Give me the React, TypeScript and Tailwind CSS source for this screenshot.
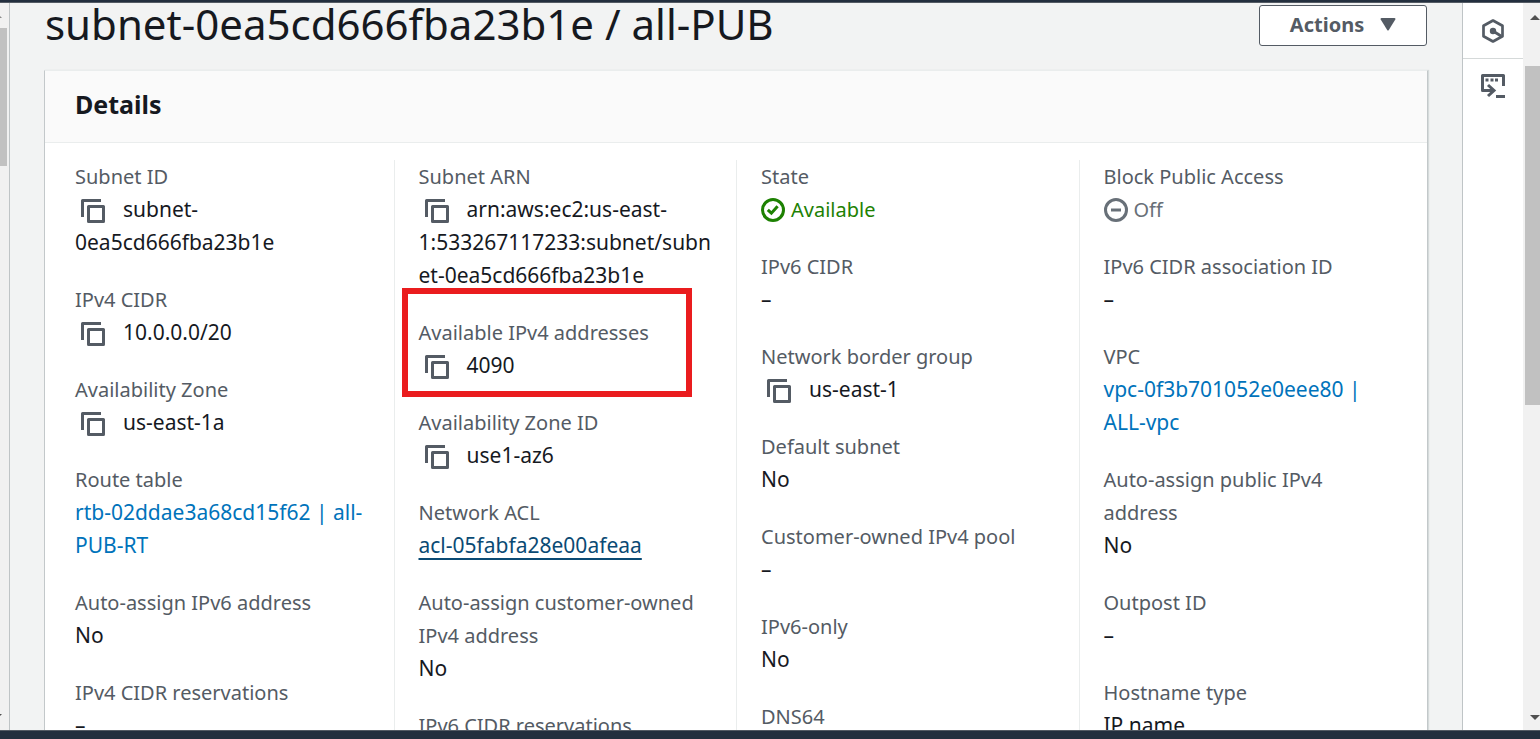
import type { ReactNode } from 'react';

function CopyButton({ label }: { label: string }) {
  return (
    <button
      type="button"
      aria-label={`Copy ${label}`}
      className="ml-1.5 mr-[18px] inline-flex h-[33px] items-center pt-0.5 align-top text-[#545b64]"
    >
      <svg width="24" height="24" viewBox="0 0 24 24" fill="none" stroke="currentColor" strokeWidth="3" strokeLinejoin="round">
        <path d="M1.5 18V1.5H20" />
        <path d="M7.5 7.5h15v15h-15z" />
      </svg>
    </button>
  );
}

function CheckIcon() {
  return (
    <svg className="mt-px" width="24" height="24" viewBox="0 0 24 24" fill="none" stroke="currentColor" strokeWidth="3">
      <circle cx="12" cy="12" r="10.5" />
      <path d="M6.8 11.8l3.6 3.4 6.2-7" />
    </svg>
  );
}

function MinusIcon() {
  return (
    <svg className="mt-px" width="24" height="24" viewBox="0 0 24 24" fill="none" stroke="currentColor" strokeWidth="3">
      <circle cx="12" cy="12" r="10.5" />
      <path d="M7 12h10" />
    </svg>
  );
}

function Item({ label, copy, marked, children }: { label: string; copy?: boolean; marked?: boolean; children: ReactNode }) {
  return (
    <div className="relative">
      <dt className="text-[20px] text-[#545b64]">{label}</dt>
      <dd className="break-words text-[#16191f]">
        {copy && <CopyButton label={label} />}
        {children}
      </dd>
      {marked && (
        <div className="pointer-events-none absolute -bottom-[15px] -left-[17px] -top-[28px] right-6 border-6 border-[#ea1c1e]" />
      )}
    </div>
  );
}

function Column({ first, children }: { first?: boolean; children: ReactNode }) {
  return (
    <dl
      className={
        first
          ? 'flex min-w-0 flex-col gap-6 pl-6 pr-5'
          : 'flex min-w-0 flex-col gap-6 border-l border-[#eaeded] pl-6 pr-5'
      }
    >
      {children}
    </dl>
  );
}

const linkClass = 'text-[#0073bb] hover:underline';

export default function App() {
  return (
    <div className="flex h-screen flex-col overflow-hidden bg-[#f2f3f3] font-['Noto_Sans','Open_Sans',sans-serif] text-[21px] leading-[33px]">
      <div className="h-[3px] shrink-0 border-b border-[#545b64] bg-[#232f3e]" />

      <div className="flex min-h-0 flex-1">
        <div className="flex w-[10px] shrink-0 flex-col border-r border-[#bfc4c6] bg-[#f1f1f1]">
          <div className="flex h-[25px] shrink-0 items-start pt-[13px]">
            <svg width="2" height="2" viewBox="0 0 2 2" fill="#8a8a8a">
              <path d="M0 0l2 2H0z" />
            </svg>
          </div>
          <div className="h-[138px] w-[7px] shrink-0 bg-[#c1c1c1]" />
          <div className="flex flex-1 items-end">
            <svg className="mb-[14px]" width="2" height="2" viewBox="0 0 2 2" fill="#505050">
              <path d="M0 0h2l-2 2z" />
            </svg>
          </div>
        </div>

        <main className="flex min-w-0 flex-1 flex-col overflow-hidden px-[34px]">
          <div className="flex h-[67px] shrink-0 items-start justify-between px-px">
            <h1 className="whitespace-nowrap text-[42px] leading-[42px] text-[#16191f]">
              subnet-0ea5cd666fba23b1e / all-PUB
            </h1>
            <button
              type="button"
              className="mt-[2px] flex h-[41px] w-[168px] items-center justify-center gap-4 rounded-[3px] border border-[#545b64] bg-white pb-0.5 text-[20px] font-bold text-[#545b64]"
            >
              Actions
              <svg width="16" height="13" viewBox="0 0 16 13" fill="currentColor">
                <path d="M1.5 0h13q1.5 0 .8 1.5L8.8 12q-.8 1-1.6 0L.7 1.500Q0 0 1.500 0z" />
              </svg>
            </button>
          </div>

          <section className="flex flex-1 flex-col border-x border-t border-x-[#c3c8ca] border-t-[#eaeded] bg-white shadow-[1px_0_1px_#d5dbdb]">
            <header className="flex h-[72px] shrink-0 items-center border-b border-[#eaeded] bg-[#fafafa] px-[30px] pb-1">
              <h2 className="text-[25px] font-bold text-[#16191f]">Details</h2>
            </header>

            <div className="grid grid-cols-4 px-1.5 pt-[17px]">
              <Column first>
                <Item label="Subnet ID" copy>subnet-0ea5cd666fba23b1e</Item>
                <Item label="IPv4 CIDR" copy>10.0.0.0/20</Item>
                <Item label="Availability Zone" copy>us-east-1a</Item>
                <Item label="Route table">
                  <a href="#route-table" className={linkClass}>rtb-02ddae3a68cd15f62 | all-<wbr />PUB-RT</a>
                </Item>
                <Item label="Auto-assign IPv6 address">No</Item>
                <Item label="IPv4 CIDR reservations">–</Item>
              </Column>
              <Column>
                <Item label="Subnet ARN" copy>
                  arn:aws:ec2:us-east-<br />1:533267117233:subnet/subn<br />et-0ea5cd666fba23b1e
                </Item>
                <Item label="Available IPv4 addresses" copy marked>4090</Item>
                <Item label="Availability Zone ID" copy>use1-az6</Item>
                <Item label="Network ACL">
                  <a href="#network-acl" className="text-[#0a4a74] underline decoration-2 underline-offset-[5px] [text-decoration-skip-ink:none]">
                    acl-05fabfa28e00afeaa
                  </a>
                </Item>
                <Item label="Auto-assign customer-owned IPv4 address">No</Item>
                <Item label="IPv6 CIDR reservations">–</Item>
              </Column>
              <Column>
                <Item label="State">
                  <span className="flex items-center gap-1.5 text-[20px] text-[#1d8102]"><CheckIcon />Available</span>
                </Item>
                <Item label="IPv6 CIDR">–</Item>
                <Item label="Network border group" copy>us-east-1</Item>
                <Item label="Default subnet">No</Item>
                <Item label="Customer-owned IPv4 pool">–</Item>
                <Item label="IPv6-only">No</Item>
                <Item label="DNS64">Disabled</Item>
              </Column>
              <Column>
                <Item label="Block Public Access">
                  <span className="flex items-center gap-1.5 text-[20px] text-[#687078]"><MinusIcon />Off</span>
                </Item>
                <Item label="IPv6 CIDR association ID">–</Item>
                <Item label="VPC">
                  <a href="#vpc" className={linkClass}>vpc-0f3b701052e0eee80 |<br />ALL-vpc</a>
                </Item>
                <Item label="Auto-assign public IPv4 address">No</Item>
                <Item label="Outpost ID">–</Item>
                <Item label="Hostname type">IP name</Item>
              </Column>
            </div>
          </section>
        </main>

        <aside className="flex w-[61px] shrink-0 flex-col border-l border-[#bfc4c6] bg-white text-[#545b64]">
          <button type="button" aria-label="Shortcuts" className="flex h-14 items-center justify-center border-b border-[#d5d9d9]">
            <svg width="24" height="24" viewBox="0 0 24 24" fill="none" stroke="currentColor" strokeWidth="2.700">
              <path d="M12 1.500l9.500 5.300v10.400L12 22.500l-9.500-5.300V6.800z" strokeLinejoin="round" />
              <path d="M12 12l8 5" />
              <circle cx="12" cy="12" r="3.200" fill="currentColor" stroke="none" />
            </svg>
          </button>
          <button type="button" aria-label="CloudShell" className="flex h-[54px] items-center justify-center">
            <svg width="24" height="24" viewBox="0 0 24 24" fill="none" stroke="currentColor" strokeWidth="3">
              <path d="M22.500 12V1.500h-21v15H13" strokeLinejoin="round" />
              <path d="M7 11l6 5.500L7 22" />
              <path d="M15 22.500h9" />
              <path d="M4.500 6h3M9.500 6h3M14 6h3" />
            </svg>
          </button>
        </aside>

        <div className="flex w-[17px] shrink-0 flex-col bg-[#f1f1f1] pl-[2px]">
          <div className="flex h-[63px] shrink-0 items-start pl-[5px] pt-3">
            <svg width="10" height="5" viewBox="0 0 10 5" fill="#505050"><path d="M5 0l5 5H0z" /></svg>
          </div>
          <div className="h-[339px] shrink-0 bg-[#c1c1c1]" />
          <div className="flex flex-1 items-end pb-[10px] pl-[5px]">
            <svg width="10" height="5" viewBox="0 0 10 5" fill="#505050"><path d="M0 0h10L5 5z" /></svg>
          </div>
        </div>
      </div>

      <div className="h-[9px] shrink-0 border-t border-[#545b64] bg-[#232f3e]" />
    </div>
  );
}
